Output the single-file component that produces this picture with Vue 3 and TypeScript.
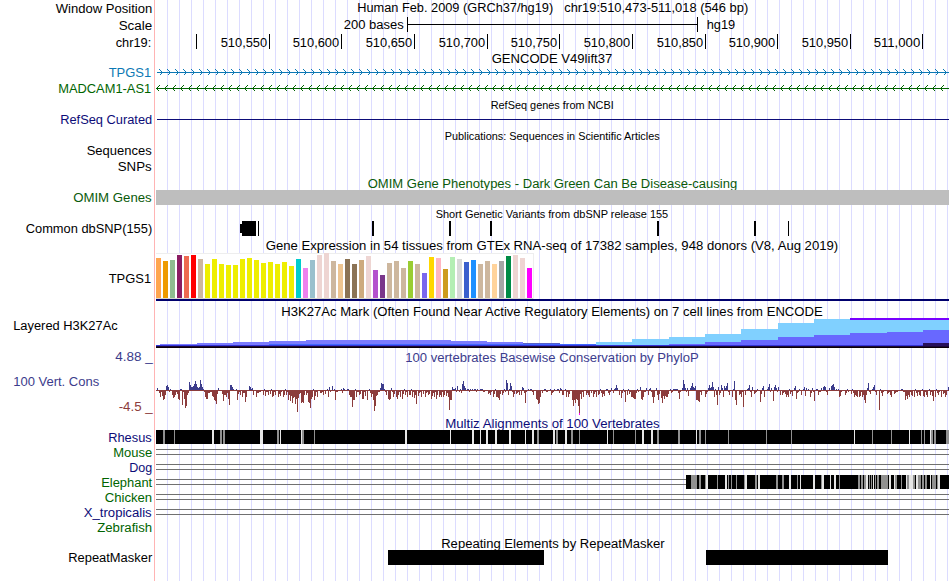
<template>
  <div class="browser">
    <div
      v-for="(row, index) in rows"
      :key="index"
      class="row"
      :style="{ height: row.height + 'px' }"
    >
      <svg class="side" :viewBox="`0 ${row.top} 155 ${row.height}`">
        <text
          v-for="t in row.labels"
          :key="t.text + t.y"
          :x="t.x"
          :y="t.y"
          :textLength="t.w"
          lengthAdjust="spacingAndGlyphs"
          :fill="t.color"
          :font-size="t.size"
        >
          {{ t.text }}
        </text>
      </svg>
      <svg
        class="plot"
        :viewBox="`155 ${row.top} 795 ${row.height}`"
        shape-rendering="crispEdges"
      >
        <g v-if="row.kind === 'scale'" fill="#000">
          <rect x="407" y="17" width="1" height="15" />
          <rect x="407" y="24" width="291" height="1" />
          <rect x="697" y="17" width="1" height="15" />
        </g>
        <g v-else-if="row.kind === 'ruler'">
          <rect v-for="x in ticks" :key="x" :x="x" y="34" width="1" height="15" />
        </g>
        <g v-else-if="row.kind === 'forward'">
          <rect x="157" y="72" width="792" height="1" :fill="blue" />
          <path :d="forwardArrows" fill="none" :stroke="blue" />
        </g>
        <g v-else-if="row.kind === 'reverse'">
          <rect x="156" y="88" width="793" height="1" :fill="green" />
          <path :d="reverseArrows" fill="none" :stroke="green" />
        </g>
        <rect
          v-else-if="row.kind === 'refseq'"
          x="157"
          y="119"
          width="792"
          height="1"
          fill="#0c0c78"
        />
        <rect
          v-else-if="row.kind === 'omim'"
          x="156"
          y="190"
          width="793"
          height="15"
          fill="#bebebe"
        />
        <g v-else-if="row.kind === 'snp'">
          <rect x="240" y="224" width="2" height="9" />
          <rect
            v-for="s in snps"
            :key="s[0]"
            :x="s[0]"
            y="221"
            :width="s[1]"
            height="15"
          />
        </g>
        <g v-else-if="row.kind === 'gtex'">
          <rect x="156" y="253" width="378" height="46" fill="#eeeeee" />
          <rect x="156" y="254" width="377" height="44" fill="#fff" />
          <rect x="156" y="298" width="377" height="1" fill="#d6d6ce" />
          <rect
            v-for="(h, i) in tissueHeights"
            :key="i"
            :x="156 + i * 7"
            :y="298 - h"
            width="5"
            :height="h"
            :fill="'#' + tissueColors[i]"
          />
          <rect x="156" y="299" width="793" height="2" fill="#00006e" />
        </g>
        <g v-else-if="row.kind === 'h3k'">
          <rect
            v-for="(s, i) in histone"
            :key="i"
            :x="s[0]"
            :y="s[2]"
            :width="s[1] - s[0]"
            :height="348 - s[2]"
            :fill="s[3]"
          />
        </g>
        <g v-else-if="row.kind === 'phylop'">
          <path :d="phyloDown" fill="#8c3c3c" />
          <path :d="phyloUp" fill="#3c3c8c" />
          <rect x="579" y="413" width="1" height="2" fill="#ff00ff" />
        </g>
        <g v-else-if="row.kind === 'align'">
          <rect x="156" :y="row.top + 4" :width="row.end! - 156" height="1" fill="#707070" />
          <rect x="156" :y="row.top + 9" :width="row.end! - 156" height="1" fill="#707070" />
        </g>
        <g v-if="row.stripes">
          <rect
            :x="row.start"
            :y="row.top"
            :width="949 - row.start!"
            height="14"
            fill="#000"
          />
          <rect
            v-for="(s, i) in row.stripes"
            :key="i"
            :x="s[0]"
            :y="row.top"
            :width="s[1]"
            height="14"
            :fill="s[2] ? '#e6e6e6' : '#909090'"
          />
        </g>
        <g v-if="row.kind === 'repeats'">
          <rect x="388" y="550" width="156" height="15" />
          <rect x="706" y="550" width="182" height="15" />
        </g>
        <text
          v-for="t in row.titles"
          :key="t.text"
          :x="t.x"
          :y="t.y"
          :textLength="t.w"
          lengthAdjust="spacingAndGlyphs"
          :fill="t.color"
          :font-size="t.size"
        >
          {{ t.text }}
        </text>
      </svg>
    </div>
  </div>
</template>

<script setup lang="ts">
interface Label {
  text: string;
  x: number;
  y: number;
  w: number;
  color: string;
  size: number;
}
type Stripe = [number, number, number];
interface Row {
  top: number;
  height: number;
  kind?: string;
  labels?: Label[];
  titles?: Label[];
  stripes?: Stripe[];
  start?: number;
  end?: number;
}

const blue = "#0c78b4";
const green = "#006400";
const navy = "#0c0c78";
const darkGreen = "#0a5a0a";

const ticks = [196, 269, 341, 414, 487, 559, 632, 705, 777, 850, 922];
const tickNames = [
  "510,550", "510,600", "510,650", "510,700", "510,750",
  "510,800", "510,850", "510,900", "510,950", "511,000",
];

// x, y, left and right edge are all in window coordinates
const label = (
  text: string,
  left: number,
  right: number,
  y: number,
  color = "#000",
  size = 13.7
): Label => ({ text, x: left - 0.8, y, w: right - left + 1, color, size });

// Strand direction marks, one every 8px
let forwardArrows = "";
for (let x = 162; x < 949; x += 8) {
  forwardArrows += `M${x - 2.5} 69.5l3 3l-3 3`;
}
let reverseArrows = "";
for (let x = 157; x < 949; x += 8) {
  reverseArrows += `M${x + 2.5} 85.5l-3 3l3 3`;
}

const snps = [
  [242, 14], [258, 1], [372, 2], [449, 2], [490, 2],
  [657, 2], [754, 2], [788, 1],
];

// GTEx median expression, in pixels
const tissueHeights = [
  40, 37, 38, 43, 42, 43, 39, 34, 39, 34, 33, 33, 39, 40, 38, 35, 36, 34,
  36, 32, 39, 30, 38, 43, 45, 37, 34, 39, 34, 38, 42, 28, 23, 35, 37, 30,
  37, 34, 25, 41, 40, 29, 41, 39, 36, 38, 34, 37, 34, 37, 42, 43, 40, 30,
];
const tissueColors = (
  "ffa54f ee9a00 8fbc8f 8b1c62 ee6a50 ff0000 cdb79e " +
  "eeee00 ".repeat(13) +
  "00cdcd ee82ee 9ac0cd eed5d2 eed5d2 cdb79e eec591 8b7355 8b7355 cdaa7d " +
  "eed5d2 b452cd 7a378b cdb79e cdb79e cdb79e 9acd32 cdb79e 7a67ee ffd700 " +
  "ffb6c1 cd9b1d b4eeb4 d9d9d9 3a5fcd 1e90ff cdb79e cdb79e ffd39b a6a6a6 " +
  "008b45 eed5d2 eed5d2 ff00ff"
).split(" ");

// Overlaid cell lines: from, to, top, color. Later ones are painted on top
const histone: [number, number, number, string][] = [
  [156, 160, 345, "#7b7bff"],
  [160, 197, 344, "#7b7bff"],
  [197, 233, 343, "#7b7bff"],
  [233, 269, 342, "#7b7bff"],
  [269, 306, 341, "#7b7bff"],
  [306, 451, 340, "#7b7bff"],
  [451, 487, 341, "#7b7bff"],
  [487, 523, 342, "#7b7bff"],
  [523, 560, 343, "#5860c8"],
  [560, 596, 344, "#4868ff"],
  [596, 632, 342, "#80d0ff"],
  [632, 669, 339, "#80d0ff"],
  [669, 705, 337, "#80d0ff"],
  [705, 741, 334, "#80d0ff"],
  [741, 778, 329, "#80d0ff"],
  [778, 814, 323, "#80d0ff"],
  [814, 850, 319, "#80d0ff"],
  [850, 949, 318, "#7800ff"],
  [850, 949, 320, "#80d0ff"],
  [669, 705, 344, "#6868ff"],
  [705, 741, 342, "#6868ff"],
  [741, 778, 340, "#6868ff"],
  [778, 814, 337, "#6868ff"],
  [814, 850, 335, "#6868ff"],
  [850, 887, 333, "#6868ff"],
  [887, 923, 332, "#6868ff"],
  [923, 949, 330, "#6868ff"],
  [269, 596, 344, "#4068ff"],
  [156, 949, 345, "#3434d8"],
  [923, 949, 343, "#28105c"],
  [156, 949, 346, "#1c0838"],
  [156, 949, 347, "#0c0008"],
];

// PhyloP scores: x, height in pixels (negative goes below the axis)
const peaks =
  "157:2 159:-3 160:-7 162:-6 163:-10 164:-9 165:-5 166:4 167:5 168:3 170:1 172:-5 173:-8 174:-7 175:-5 177:-4 178:-9 179:-10 180:1 181:1 182:-15 184:-9 185:-18 186:-16 187:-5 " +
  "189:8 190:5 191:3 192:3 193:4 194:6 195:9 196:6 197:3 198:2 199:3 200:10 201:6 202:3 203:1 205:-7 206:-9 207:-9 208:-3 212:-6 213:-7 214:-10 215:-11 216:-14 217:-4 218:2 " +
  "222:-4 223:-11 224:-5 225:-5 226:-7 227:-3 228:-9 229:-15 230:5 231:5 232:3 233:1 237:-10 238:-4 240:-5 242:-7 243:-3 245:-12 246:-7 249:4 250:3 251:1 252:2 253:-5 256:-7 257:-3 261:0 " +
  "263:-5 265:-6 268:-5 270:-4 272:-7 273:-6 275:-5 278:-7 279:-4 280:-6 283:-7 284:-5 286:-5 288:-10 289:-5 290:-11 291:-6 292:-13 293:-8 294:-7 295:-14 296:-9 297:-22 298:-8 299:-4 " +
  "301:-13 302:-12 303:-13 304:-5 306:-5 308:-12 309:-13 310:-18 311:-9 312:-7 314:-10 315:-6 317:-7 320:-3 323:-5 325:-4 328:-7 329:3 332:4 335:-10 343:2 344:1 347:1 349:-5 350:-7 351:-7 352:-17 353:-10 354:-10 356:-7 359:-5 360:-4 " +
  "362:-9 363:-9 365:-6 367:-10 371:-7 372:-4 373:-10 374:-21 375:-16 376:-6 377:-5 380:2 381:7 382:6 383:6 384:1 386:-5 388:-9 389:-10 390:-9 391:2 393:-7 394:-4 396:-7 397:-9 398:-5 400:-7 402:-9 403:-4 405:-5 407:-7 409:-5 410:-5 412:-7 414:-8 415:-5 416:-14 418:-6 421:-7 423:-4 425:-7 428:-5 429:-4 431:-9 432:-6 434:-7 436:-9 437:-5 439:-7 440:-5 441:-7 443:-7 444:-5 446:-6 448:-7 449:-20 450:-10 451:-10 " +
  "452:3 454:1 455:2 457:4 459:-2 462:6 463:9 464:4 465:2 468:1 470:1 472:1 475:1 477:1 480:1 482:1 488:-4 490:-5 493:-7 494:-4 496:-7 497:-7 498:-8 499:-10 500:-4 502:-5 504:1 506:10 507:7 508:-5 510:7 511:4 513:-7 514:-4 516:-4 519:-5 521:-5 522:3 523:2 525:-13 528:1 531:1 533:-5 536:-9 537:-10 538:-14 539:-13 540:-7 542:-3 545:1 550:1 551:-5 554:1 557:1 560:2 561:1 562:-5 563:-5 566:-7 568:-7 569:-4 " +
  "572:-10 573:-16 574:-10 575:-13 576:-9 577:-10 578:-16 579:-25 580:-4 581:-9 583:-7 586:-5 588:-5 589:-7 591:-3 593:-7 594:-4 596:-7 598:-5 599:-4 602:-7 603:-4 604:-6 606:1 609:-5 611:2 613:-3 615:2 616:5 617:2 619:-5 621:-8 623:1 625:-12 627:-5 " +
  "629:-4 631:-7 632:-7 633:-8 634:-9 635:-9 637:1 640:3 641:-9 642:-10 643:-7 646:2 648:-5 650:2 652:-7 653:-13 654:-7 656:2 657:-5 658:-10 659:-4 661:-8 662:-13 663:-6 664:-9 665:-6 666:-7 667:-7 668:-4 673:1 674:1 675:1 676:1 679:-9 682:2 683:10 684:6 685:2 687:2 688:-6 690:2 691:4 692:7 693:3 694:2 695:4 696:-10 697:-10 698:-11 699:-12 701:-5 705:-7 706:-4 " +
  "708:2 709:5 710:2 711:3 712:8 713:3 714:-7 715:1 716:-5 717:-15 718:3 719:-5 721:5 722:2 723:-7 724:4 725:2 726:4 727:7 729:-5 732:-7 734:9 735:-10 736:-15 739:-5 740:-4 741:-7 743:-17 745:-5 748:2 749:5 751:-7 752:3 754:-4 757:1 760:-12 761:-4 762:2 763:4 764:-7 767:1 768:3 769:6 771:2 773:-11 774:3 775:5 776:2 778:3 780:-5 782:-5 785:-4 786:-7 787:-5 788:-7 790:-4 792:-6 " +
  "794:2 795:4 796:-9 799:1 801:-5 804:3 805:-6 806:2 808:1 810:-7 812:2 814:-11 816:1 818:-5 821:2 823:3 824:4 825:3 827:-5 829:2 831:4 832:5 833:6 834:3 836:1 839:-7 840:-6 845:-5 847:1 851:-4 854:-7 855:-5 856:-6 857:-7 859:-7 860:-6 862:-7 863:-5 864:-10 865:-13 866:-5 867:2 868:7 870:-4 872:1 873:3 874:5 876:-5 879:-20 882:-6 887:-4 890:-5 891:-7 894:-4 901:1 902:1 " +
  "905:-10 906:-6 907:-9 908:-5 909:-7 911:-5 912:-6 914:-7 917:-6 919:-5 920:-6 923:-6 924:-7 926:-5 927:-7 930:-5 932:-6 933:-11 935:-7 938:-5 941:-7 943:-4 945:-7 946:-5 948:3";

const scores = new Map<number, number>(
  peaks.split(" ").map((p) => p.split(":").map(Number) as [number, number])
);
const filler = [-2, -1, -3, -1, 1, -2, -1];

let phyloUp = "";
let phyloDown = "";
for (let x = 156; x < 949; x++) {
  const v = scores.get(x) ?? filler[(x * 5) % 7];
  if (v > 0) phyloUp += `M${x} ${390 - v}h1v${v}h-1z`;
  phyloDown += `M${x} 390h1v${v < 0 ? -v : 1}h-1z`;
}

// start:width, with "w" in front for the lighter unaligned columns
const parse = (s: string): Stripe[] =>
  s.split(" ").map((p) => {
    const [x, w] = p.replace("w", "").split(":").map(Number);
    return [x, w, p[0] === "w" ? 1 : 0];
  });

const rhesus = parse(
  "163:2 174:1 w212:2 220:2 223:2 w260:3 277:2 w280:1 w301:1 302:2 314:1 " +
  "w405:2 w450:1 w472:2 w480:1 w486:2 w495:2 w509:2 w525:1 w532:2 537:2 " +
  "w553:2 556:2 w565:2 571:2 579:1 w607:1 613:1 635:1 w642:2 w651:2 657:2 " +
  "678:2 w696:1 699:2 705:1 728:1 766:1 791:1 w854:1 872:1 891:1 w909:1 " +
  "921:1 924:1 w930:1 931:2 934:2 946:3"
);
const elephant = parse(
  "691:6 699:2 705:1 w706:2 717:1 w725:2 728:1 731:1 736:1 744:1 w745:2 " +
  "755:2 w758:2 776:2 782:2 w789:2 797:1 w800:1 w813:2 821:1 w822:2 w830:1 " +
  "w834:2 839:1 858:2 861:2 864:2 w866:2 869:1 871:1 w873:1 875:1 877:2 " +
  "881:7 w889:2 w894:1 895:2 901:1 w906:1 907:2 w909:4 913:2 w916:2 918:3 " +
  "922:2 925:2 w930:1 932:4 937:1 w938:2"
);

const align = (
  top: number,
  text: string,
  left: number,
  right: number,
  color: string,
  end = 949
): Row => ({
  top,
  height: 15,
  kind: "align",
  end,
  labels: [label(text, left, right, top + 12, color)],
});

const rows: Row[] = [
  {
    top: 0,
    height: 17,
    labels: [label("Window Position", 56.5, 152, 13)],
    titles: [
      label("Human Feb. 2009 (GRCh37/hg19)", 358, 553, 12),
      label("chr19:510,473-511,018 (546 bp)", 565, 748, 12),
    ],
  },
  {
    top: 17,
    height: 16,
    kind: "scale",
    labels: [label("Scale", 119.5, 152, 30)],
    titles: [label("200 bases", 344.5, 403.5, 29), label("hg19", 707.5, 735, 29)],
  },
  {
    top: 33,
    height: 17,
    kind: "ruler",
    labels: [label("chr19:", 116.5, 151, 47)],
    titles: tickNames.map((name, i) =>
      label(name, ticks[i + 1] - 47.5, ticks[i + 1] - 2, 47)
    ),
  },
  { top: 50, height: 15, titles: [label("GENCODE V49lift37", 492.5, 612, 63)] },
  {
    top: 65,
    height: 15,
    kind: "forward",
    labels: [label("TPGS1", 109.5, 151, 77, blue)],
  },
  {
    top: 80,
    height: 17,
    kind: "reverse",
    labels: [label("MADCAM1-AS1", 59, 151, 93, green)],
  },
  {
    top: 97,
    height: 15,
    titles: [label("RefSeq genes from NCBI", 491.5, 613.5, 109, "#000", 11.3)],
  },
  {
    top: 112,
    height: 16,
    kind: "refseq",
    labels: [label("RefSeq Curated", 61, 152, 124, navy)],
  },
  {
    top: 128,
    height: 16,
    titles: [
      label("Publications: Sequences in Scientific Articles", 445.5, 659.5, 140, "#000", 11.3),
    ],
  },
  { top: 144, height: 15, labels: [label("Sequences", 87.5, 151.5, 155)] },
  { top: 159, height: 16, labels: [label("SNPs", 118.5, 151.5, 171)] },
  {
    top: 175,
    height: 15,
    titles: [
      label("OMIM Gene Phenotypes - Dark Green Can Be Disease-causing", 368.5, 737, 188, darkGreen),
    ],
  },
  {
    top: 190,
    height: 16,
    kind: "omim",
    labels: [label("OMIM Genes", 74, 151.5, 202, darkGreen)],
  },
  {
    top: 206,
    height: 15,
    titles: [
      label("Short Genetic Variants from dbSNP release 155", 436.5, 668, 218, "#000", 11.3),
    ],
  },
  {
    top: 221,
    height: 16,
    kind: "snp",
    labels: [label("Common dbSNP(155)", 26.5, 152, 233)],
  },
  {
    top: 237,
    height: 15,
    titles: [
      label(
        "Gene Expression in 54 tissues from GTEx RNA-seq of 17382 samples, 948 donors (V8, Aug 2019)",
        266.5,
        838,
        250
      ),
    ],
  },
  {
    top: 252,
    height: 50,
    kind: "gtex",
    labels: [label("TPGS1", 109.5, 151, 283)],
  },
  {
    top: 302,
    height: 15,
    titles: [
      label(
        "H3K27Ac Mark (Often Found Near Active Regulatory Elements) on 7 cell lines from ENCODE",
        282,
        822.5,
        316
      ),
    ],
  },
  {
    top: 317,
    height: 32,
    kind: "h3k",
    labels: [label("Layered H3K27Ac", 14, 117.5, 330)],
  },
  {
    top: 349,
    height: 15,
    labels: [label("4.88 _", 116, 152.5, 361, "#3c3c8c")],
    titles: [
      label("100 vertebrates Basewise Conservation by PhyloP", 406, 698.5, 362, "#3c3c8c"),
    ],
  },
  {
    top: 364,
    height: 52,
    kind: "phylop",
    labels: [
      label("100 Vert. Cons", 14, 99, 386, "#3c3c8c"),
      label("-4.5 _", 119.5, 152.5, 411, "#8c3c3c"),
    ],
  },
  {
    top: 416,
    height: 14,
    titles: [label("Multiz Alignments of 100 Vertebrates", 446, 659.5, 428, navy)],
  },
  {
    top: 430,
    height: 15,
    labels: [label("Rhesus", 109, 151.5, 442, navy)],
    stripes: rhesus,
    start: 156,
  },
  align(445, "Mouse", 114, 152, green),
  align(460, "Dog", 130, 152, navy),
  {
    ...align(475, "Elephant", 102, 152, green, 686),
    stripes: elephant,
    start: 686,
  },
  align(490, "Chicken", 105.5, 152, green),
  align(505, "X_tropicalis", 84.5, 151.5, navy),
  { top: 520, height: 16, labels: [label("Zebrafish", 98, 152, 532, green)] },
  {
    top: 536,
    height: 14,
    titles: [label("Repeating Elements by RepeatMasker", 442, 664.5, 548)],
  },
  {
    top: 550,
    height: 31,
    kind: "repeats",
    labels: [label("RepeatMasker", 69, 152, 562)],
  },
];
</script>

<style>
body {
  background: #fff;
}
</style>

<style scoped>
.browser {
  display: flex;
  flex-direction: column;
  width: 950px;
  height: 581px;
  overflow: hidden;
  font-family: "Liberation Sans", Arial, Helvetica, sans-serif;
  background-color: #fff;
  /* red edge of the plot area, then the vertical guide lines */
  background-image: linear-gradient(#ffb4b4, #ffb4b4),
    repeating-linear-gradient(
      to right,
      transparent 0,
      transparent 11px,
      #dcdcff 11px,
      #dcdcff 12px
    );
  background-position: 154px 0, 156px 0;
  background-size: 1px 100%, 793px 100%;
  background-repeat: no-repeat;
}

.row {
  display: grid;
  grid-template-columns: 155px 795px;
  flex: none;
}

.side,
.plot {
  display: block;
  width: 100%;
  height: 100%;
  overflow: visible;
}
</style>
